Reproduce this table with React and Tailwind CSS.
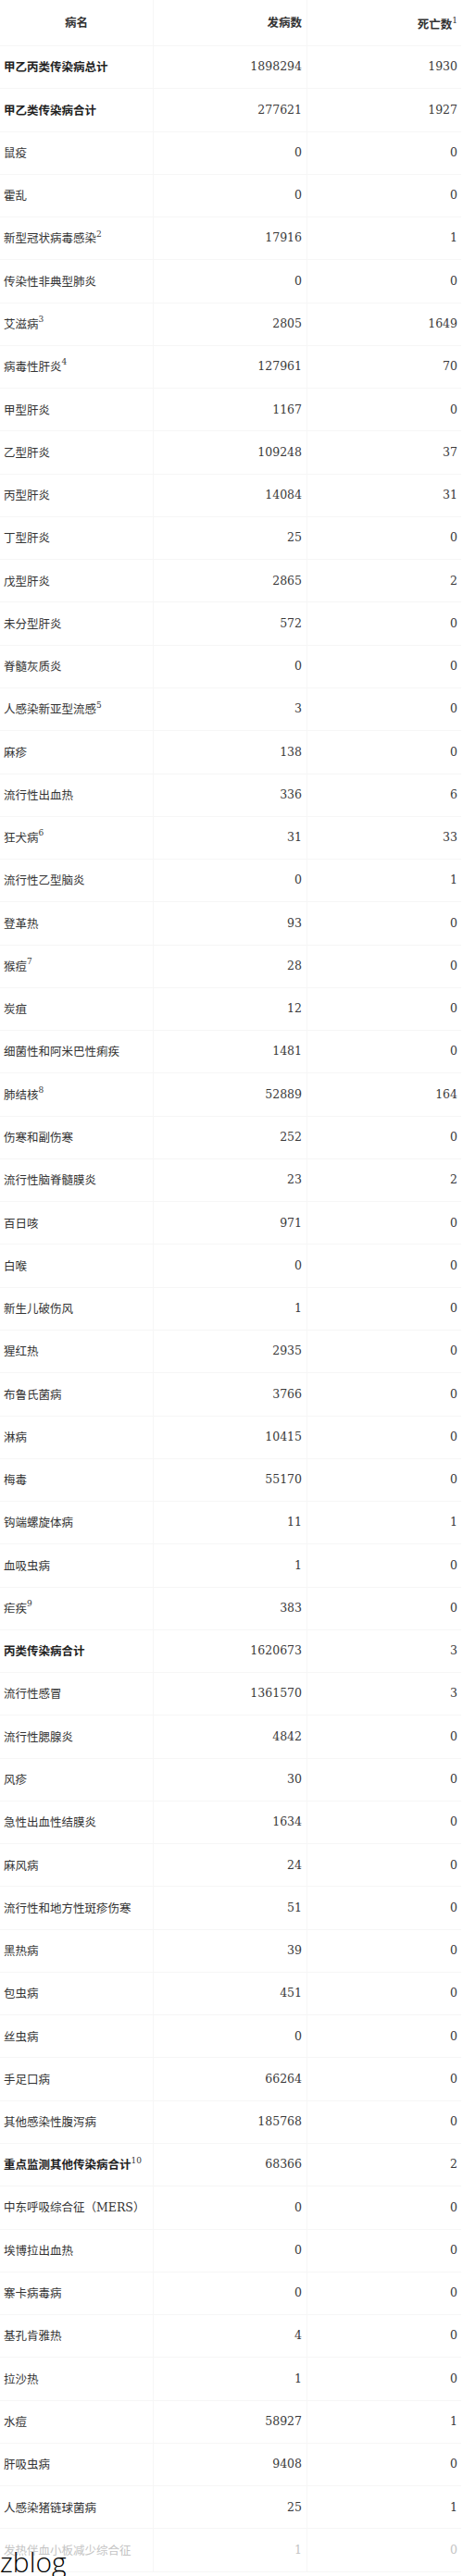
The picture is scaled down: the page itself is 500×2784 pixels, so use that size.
import React from "react";

const rows = [
  ["甲乙丙类传染病总计", null, "1898294", "1930", true],
  ["甲乙类传染病合计", null, "277621", "1927", true],
  ["鼠疫", null, "0", "0"],
  ["霍乱", null, "0", "0"],
  ["新型冠状病毒感染", "2", "17916", "1"],
  ["传染性非典型肺炎", null, "0", "0"],
  ["艾滋病", "3", "2805", "1649"],
  ["病毒性肝炎", "4", "127961", "70"],
  ["甲型肝炎", null, "1167", "0"],
  ["乙型肝炎", null, "109248", "37"],
  ["丙型肝炎", null, "14084", "31"],
  ["丁型肝炎", null, "25", "0"],
  ["戊型肝炎", null, "2865", "2"],
  ["未分型肝炎", null, "572", "0"],
  ["脊髓灰质炎", null, "0", "0"],
  ["人感染新亚型流感", "5", "3", "0"],
  ["麻疹", null, "138", "0"],
  ["流行性出血热", null, "336", "6"],
  ["狂犬病", "6", "31", "33"],
  ["流行性乙型脑炎", null, "0", "1"],
  ["登革热", null, "93", "0"],
  ["猴痘", "7", "28", "0"],
  ["炭疽", null, "12", "0"],
  ["细菌性和阿米巴性痢疾", null, "1481", "0"],
  ["肺结核", "8", "52889", "164"],
  ["伤寒和副伤寒", null, "252", "0"],
  ["流行性脑脊髓膜炎", null, "23", "2"],
  ["百日咳", null, "971", "0"],
  ["白喉", null, "0", "0"],
  ["新生儿破伤风", null, "1", "0"],
  ["猩红热", null, "2935", "0"],
  ["布鲁氏菌病", null, "3766", "0"],
  ["淋病", null, "10415", "0"],
  ["梅毒", null, "55170", "0"],
  ["钩端螺旋体病", null, "11", "1"],
  ["血吸虫病", null, "1", "0"],
  ["疟疾", "9", "383", "0"],
  ["丙类传染病合计", null, "1620673", "3", true],
  ["流行性感冒", null, "1361570", "3"],
  ["流行性腮腺炎", null, "4842", "0"],
  ["风疹", null, "30", "0"],
  ["急性出血性结膜炎", null, "1634", "0"],
  ["麻风病", null, "24", "0"],
  ["流行性和地方性斑疹伤寒", null, "51", "0"],
  ["黑热病", null, "39", "0"],
  ["包虫病", null, "451", "0"],
  ["丝虫病", null, "0", "0"],
  ["手足口病", null, "66264", "0"],
  ["其他感染性腹泻病", null, "185768", "0"],
  ["重点监测其他传染病合计", "10", "68366", "2", true],
  ["中东呼吸综合征（MERS）", null, "0", "0"],
  ["埃博拉出血热", null, "0", "0"],
  ["寨卡病毒病", null, "0", "0"],
  ["基孔肯雅热", null, "4", "0"],
  ["拉沙热", null, "1", "0"],
  ["水痘", null, "58927", "1"],
  ["肝吸虫病", null, "9408", "0"],
  ["人感染猪链球菌病", null, "25", "1"],
  ["发热伴血小板减少综合征", null, "1", "0"],
];

function Name({ name, bold, last }) {
  const color = last ? "text-[#c4c4c4]" : bold ? "text-[#222]" : "text-[#333]";
  return (
    <span className={`font-['Noto_Sans_CJK_SC',sans-serif] ${bold ? "font-bold" : ""} ${color}`}>
      {name === "中东呼吸综合征（MERS）" ? (
        <>
          中东呼吸综合征（<span className="font-['DejaVu_Serif',serif]">MERS</span>）
        </>
      ) : (
        name
      )}
    </span>
  );
}

export default function App() {
  return (
    <div className="relative w-[500px] h-[2784px] bg-white overflow-hidden font-['DejaVu_Serif','Noto_Sans_CJK_SC',serif]">
      <div className="w-[498px] text-[12.5px] leading-none text-[#333]">
        <div className="flex h-[50px] border-b border-[#f6f6f6] font-bold">
          <div className="w-[166px] flex items-center justify-center border-r border-[#f6f6f6] font-['Noto_Sans_CJK_SC',sans-serif]">
            病名
          </div>
          <div className="w-[166px] flex items-center justify-end pr-[5px] border-r border-[#f6f6f6] font-['Noto_Sans_CJK_SC',sans-serif]">
            发病数
          </div>
          <div className="w-[166px] flex items-center justify-end pr-[4px] pt-[4px]">
            <span className="font-['Noto_Sans_CJK_SC',sans-serif]">死亡数</span>
            <sup className="text-[9px] font-normal relative -top-[5px] align-baseline">1</sup>
          </div>
        </div>
        {rows.map(([name, sup, a, b, bold], i) => {
          const last = i === rows.length - 1;
          return (
            <div
              key={i}
              className={`flex h-[46.28px] border-b border-[#f6f6f6] ${last ? "text-[#c4c4c4]" : "text-[#3a3a3a]"}`}
            >
              <div className="w-[166px] flex items-center pl-[4px] border-r border-[#f6f6f6] whitespace-nowrap">
                <Name name={name} bold={bold} last={last} />
                {sup && <sup className="text-[9px] relative -top-[5px] align-baseline">{sup}</sup>}
              </div>
              <div className="w-[166px] flex items-center justify-end pr-[5px] border-r border-[#f6f6f6]">{a}</div>
              <div className="w-[166px] flex items-center justify-end pr-[4px]">{b}</div>
            </div>
          );
        })}
      </div>
      <div className="absolute left-0 top-[2754px] text-[30px] leading-none font-light text-black font-['Open_Sans',sans-serif]">
        zblog
      </div>
    </div>
  );
}
